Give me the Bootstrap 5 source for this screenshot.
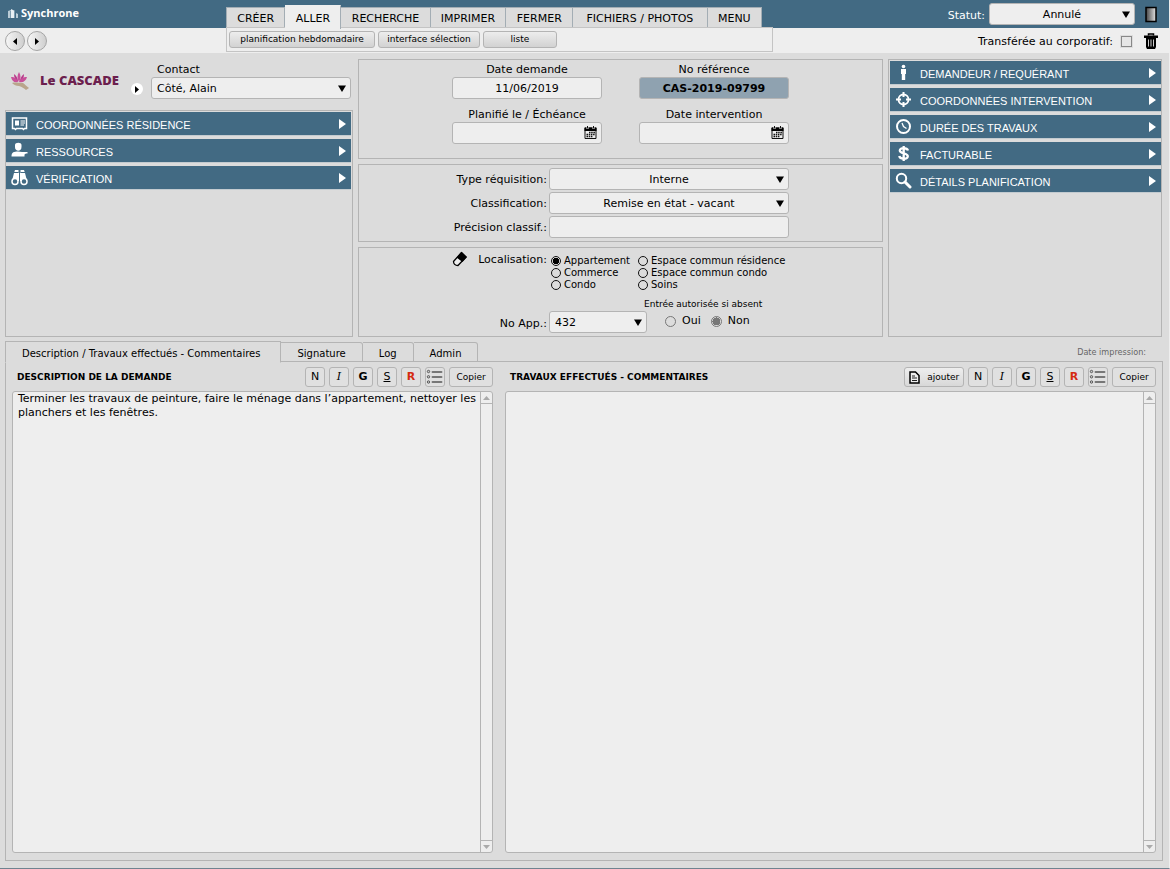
<!DOCTYPE html>
<html lang="fr">
<head>
<meta charset="utf-8">
<meta name="viewport" content="width=device-width, initial-scale=1">
<title>Synchrone</title>
<link href="https://cdn.jsdelivr.net/npm/bootstrap@5.3.0/dist/css/bootstrap.min.css" rel="stylesheet">
<style>
:root{--blue:#426a83;--bg:#dcdcdc;--field:#eee;--line:#b4b4b4}
body{font-family:"DejaVu Sans",Verdana,sans-serif;font-size:11px;line-height:14px;color:#000;background:var(--bg);border-right:1px solid #eee;border-bottom:1px solid #6f8390}
button,input,select,textarea{font:inherit;color:inherit}
/* header */
.topbar{background:linear-gradient(var(--blue) 28px,#eee 28px);height:53px}
.brand-col{width:226px}
.brand-name{font:bold 11px/14px "Open Sans",sans-serif;color:#fff;padding:6px 0 0 8px;height:30px;gap:2px}
.pager{gap:2px;padding:1px 0 0 5px}
.round-btn{width:20px;height:20px;border-radius:50%;border:1px solid #a5a5a5;background:linear-gradient(90deg,#f6f6f6,#cfcfcf)}
.round-btn.plain{width:12px;height:12px;background:#fff;border:0}
.menu-tabs{height:27px;padding-top:5px;width:536px}
.menu-tabs .nav-link{color:#000;padding:0 8px;border:1px solid #a3adb4;border-bottom:0;border-left-width:0;border-radius:0;background:var(--bg);height:20px;line-height:22px;white-space:nowrap}
.menu-tabs .nav-link.roomy{padding:0 11px}
.menu-tabs .nav-item:first-child .nav-link{border-left-width:1px}
.menu-tabs .nav-link.active{background:#eee;height:24px;line-height:26px;border-color:#eee #a3adb4 #eee #eee;margin-bottom:-2px}
.sub-menu{width:547px;height:25px;border:1px solid #c4c4c4;background:#eee;padding:3px 2px;gap:3px}
.sub-menu button{height:17px;font-size:9px;line-height:15px}
.soft-btn{border:1px solid var(--line);border-radius:3px;background:linear-gradient(#ededed,#d2d2d2);padding:0}
.w-a{width:146px}.w-b{width:102px}.w-c{width:74px}
.status-side{margin-right:11px}
.status-row{padding-top:3px}
.transfer-row{padding-top:8px}
.transfer-row label{padding-top:1px}
/* fields */
.fld{width:100%;height:22px;border:1px solid var(--line);border-radius:3px;background-color:var(--field);padding:1px 5px 0}
select.fld{appearance:none;background-repeat:no-repeat;background-position:right 4px center;background-image:url("data:image/svg+xml,%3Csvg xmlns='http://www.w3.org/2000/svg' width='8' height='7'%3E%3Cpath d='M0 .5h8L4 7z'/%3E%3C/svg%3E")}
.fld.mid{text-align:center;text-align-last:center}
.ref-no{background-color:#8fa2b0;font-weight:bold}
.status-field{width:146px}
.cal-btn{position:absolute;right:5px;top:4px;line-height:0}
.bare{border:0;background:none;padding:0}
/* upper columns */
.upper{display:grid;grid-template-columns:348fr 525fr 274fr;gap:5px;padding:6px 7px 0 5px}
.frame{border:1px solid var(--line)}
.frame.open-list{padding:1px 1px 0 0;gap:4px}
.frame.right-list{padding:1px 0 0 1px}
.residence{height:51px}
.logo-word{font:800 13px/18px "Open Sans",sans-serif;color:#6c1f4e}
.logo-mark{margin:13px 0 0 5px}
.contact-box{width:202px;padding:3px 2px 0 0}
.contact-box label{line-height:15px;padding-left:6px}
.section-bar{display:flex;align-items:center;width:100%;height:23px;border:0;background:var(--blue);color:#fff;padding:0 5px;font:11px/19px "Liberation Sans",Arial,sans-serif;text-align:left;box-shadow:0 1px 0 #c3cbd0}
.section-bar span{padding-top:4px}
.section-bar svg:first-child{width:17px;height:17px;margin-right:8px;flex:none}
.date-grid{display:grid;grid-template-columns:150px 150px;column-gap:37px;row-gap:9px;justify-content:center;text-align:center;padding:3px 0 14px}
.date-grid label{display:block;line-height:14px}
.req-grid{display:grid;grid-template-columns:97px 240px;row-gap:2px;justify-content:center;align-items:center;padding:3px 0}
.req-grid .lbl{text-align:right;padding:2px 2px 0 0;white-space:nowrap}
.location{min-height:90px}
.choices{display:grid;grid-template-columns:87px auto;font-size:10px;line-height:12px;padding:4px 0 0 2px;white-space:nowrap}
.choices label,.yesno label{display:flex;align-items:center}
.rad{appearance:none;width:10px;height:10px;border:1px solid #111;border-radius:50%;margin:0 3px 0 0;flex:none}
.rad:checked{background:radial-gradient(circle,#000 0 3px,transparent 3px)}
.yesno .rad{border-color:#777;width:11px;height:11px;margin-right:6px}
.yesno .rad:checked{background:radial-gradient(circle,#777 0 4px,transparent 4px)}
.yesno-row{gap:10px;padding:4px 0 5px 18px}
.tiny{font-size:9px;line-height:12px}
.print-date{font-family:"DejaVu Sans Condensed","DejaVu Sans",sans-serif;color:#666;padding:9px 23px 0 0}
.app-select{width:98px}
.tickbox{appearance:none;width:11px;height:11px;border:1px solid #888;background:#e6e6e6;margin:0;outline:1px solid #ddd}
/* lower tabs */
.page-tabs{padding:3px 0 0 5px;height:25px;position:relative;font-size:10px}
.page-tabs .nav-link{color:#000;padding:0 16px;border:1px solid var(--line);border-left-width:0;border-radius:0 3px 0 0;height:20px;line-height:22px}
.page-tabs .nav-link.active{background:var(--bg);color:#000;border-color:var(--line) var(--line) var(--bg);border-left-width:1px;border-radius:0;height:22px;line-height:24px;margin-bottom:-1px;padding:0 20px 0 16px}
.workspace{display:grid;grid-template-columns:481fr 651fr;gap:12px;margin:-1px 6px 7px 5px;border:1px solid var(--line);padding:5px 6px 7px}
.pane-title{font-size:9px;font-weight:bold;margin:0;line-height:14px;padding-left:5px}
.tool-btn{width:20px;height:20px;border:1px solid var(--line);border-radius:3px;background:#e0e0e0;padding:0;line-height:18px;text-align:center}
.tool-btn.wide{width:44px;font-size:9px}
.tool-btn.add{width:60px;font-size:9px;background:linear-gradient(#eee,#d8d8d8)}
.slanted{font-family:"DejaVu Serif",serif;font-style:italic}
.red-ink{color:#d42a10}
.note{border:1px solid var(--line);border-radius:3px;background:var(--field);margin-top:4px}
.note textarea{border:0;background:none;resize:none;padding:0 0 0 5px;outline:0;line-height:14px;overflow:hidden}
.scroller{width:12px;border-left:1px solid var(--line)}
.scroller button{height:12px;line-height:0;width:11px}
.scroller button:first-child{border-bottom:1px solid var(--line)}
.scroller button:last-child{border-top:1px solid var(--line)}
</style>
</head>
<body class="d-flex flex-column min-vh-100">
<svg width="0" height="0" class="position-absolute" aria-hidden="true">
  <symbol id="cal" viewBox="0 0 13 13"><path d="M1 2h11v10.500H1z" fill="#eee" stroke="#111"/><path d="M.5 1.500h12V5H.5z"/><path d="M3.500 0v3M9.500 0v3" stroke="#eee" stroke-width="2"/><path d="M3.500 0v2.500M9.500 0v2.500" stroke="#111"/><path d="M5 6.500h6M2.500 8.500H11M2.500 10.500H9" stroke="#111" stroke-width="1.300" stroke-dasharray="1.500 .7"/></symbol>
  <symbol id="go" viewBox="0 0 7 10"><path d="M0 0l7 5-7 5z" fill="#fff"/></symbol>
  <symbol id="bullets" viewBox="0 0 18 16"><g fill="#ccc" stroke="#555"><circle cx="2.500" cy="2.500" r="1.200"/><circle cx="2.500" cy="7.800" r="1.200"/><circle cx="2.500" cy="13" r="1.200"/></g><path d="M6.500 3h9M6.500 8h9M6.500 13h9" stroke="#777" stroke-width="1.900" stroke-linecap="round"/></symbol>
</svg>

<header class="topbar d-flex">
  <div class="brand-col flex-shrink-0">
    <div class="brand-name d-flex"><svg width="11" height="14" viewBox="0 0 11 14"><path d="M0 5l3-1v8H0zM8 7l2 1v4H8z" fill="#b9cbd6"/><path d="M3 3l4 2v7H3z" fill="#e8eff3"/><path d="M2.500 5v7M6.500 5v7" stroke="#7d9bae"/></svg><span>Synchrone</span></div>
    <div class="pager d-flex">
      <button class="round-btn p-0 d-flex align-items-center justify-content-center" aria-label="Précédent"><svg width="4" height="7" viewBox="0 0 4 7"><path d="M4 0v7L0 3.500z"/></svg></button>
      <button class="round-btn p-0 d-flex align-items-center justify-content-center" aria-label="Suivant"><svg width="4" height="7" viewBox="0 0 4 7"><path d="M0 0v7l4-3.500z"/></svg></button>
    </div>
  </div>
  <div class="flex-shrink-0">
    <ul class="nav nav-fill menu-tabs align-items-end flex-nowrap">
      <li class="nav-item"><a class="nav-link" href="#">CRÉER</a></li>
      <li class="nav-item"><a class="nav-link active" href="#">ALLER</a></li>
      <li class="nav-item"><a class="nav-link" href="#">RECHERCHE</a></li>
      <li class="nav-item"><a class="nav-link" href="#">IMPRIMER</a></li>
      <li class="nav-item"><a class="nav-link" href="#">FERMER</a></li>
      <li class="nav-item"><a class="nav-link roomy" href="#">FICHIERS / PHOTOS</a></li>
      <li class="nav-item"><a class="nav-link" href="#">MENU</a></li>
    </ul>
    <div class="sub-menu d-flex">
      <button class="soft-btn w-a">planification hebdomadaire</button>
      <button class="soft-btn w-b">interface sélection</button>
      <button class="soft-btn w-c">liste</button>
    </div>
  </div>
  <div class="ms-auto flex-shrink-0 status-side">
    <div class="status-row d-flex align-items-center text-white">
      <label for="statut" class="me-1 ms-auto pt-1">Statut:</label>
      <select id="statut" class="fld mid status-field text-black"><option>Annulé</option></select>
      <button class="bare ms-2 lh-1" aria-label="Sortie"><svg width="15" height="17" viewBox="0 0 15 17"><defs><linearGradient id="door"><stop stop-color="#444"/><stop offset="1" stop-color="#e5e5e5"/></linearGradient></defs><path d="M3 1.500h10v14H3z" fill="url(#door)" stroke="#000" stroke-width="1.500"/></svg></button>
    </div>
    <div class="transfer-row d-flex align-items-center justify-content-end">
      <label for="corp" class="me-2">Transférée au corporatif:</label>
      <input type="checkbox" class="tickbox" id="corp">
      <button class="bare ms-2 ps-1 lh-1" aria-label="Supprimer"><svg width="14" height="16" viewBox="0 0 14 16"><path d="M4.500 2.500V1h5v1.500" fill="none" stroke="#000" stroke-width="1.500"/><path d="M0 2.500h14V5H0zM2 4.500h10V14l-1 2H3l-1-2z"/><path d="M4.500 6.500v7M7 6.500v7M9.500 6.500v7" stroke="#ccc"/></svg></button>
    </div>
  </div>
</header>

<main class="d-flex flex-column flex-grow-1">
<div class="upper">
  <section class="d-flex flex-column">
    <div class="residence d-flex align-items-start">
      <svg width="22" height="20" viewBox="0 0 22 20" class="logo-mark"><g fill="#c8509a"><path d="M9 0c2 3 2 7 0 10-2-3-2-7 0-10z"/><path d="M4 2c3 2 4 5 4 8C5 8 4 5 4 2zM14 2c-3 2-4 5-4 8 3-2 4-5 4-8z" fill="#b83a8b"/><path d="M1 5c4 0 6 2 7 5-4 1-6-1-7-5zM17 5c-4 0-7 2-8 5 4 1 7-1 8-5z"/></g><path d="M2 11c3-1 7 0 11 0 2 1 3 3 6 5l-3 2c-2-2-4-3-7-4-3 0-5-1-7-3z" fill="#b9a58b"/></svg>
      <span class="logo-word ms-2 pt-1 mt-2">Le CASCADE</span>
      <button class="round-btn plain p-0 ms-auto mt-4 d-flex align-items-center justify-content-center" aria-label="Ouvrir la résidence"><svg width="4" height="7" viewBox="0 0 4 7"><path d="M0 0v7l4-3.500z"/></svg></button>
      <div class="contact-box ms-2"><label for="contact" class="d-block">Contact</label>
      <select id="contact" class="fld"><option>Côté, Alain</option></select></div>
    </div>
    <div class="frame open-list d-flex flex-column flex-grow-1">
      <button class="section-bar"><svg viewBox="0 0 17 17"><path d="M1.500 3h14v10.500h-2l-1 1-1-1h-6l-1 1-1-1h-2z" fill="none" stroke="#fff" stroke-width="1.500"/><path d="M4 5.500h4v5H4z" fill="#fff"/><path d="M9.500 6H14M9.500 8H14M9.500 10H13" stroke="#fff"/></svg><span>COORDONNÉES RÉSIDENCE</span><svg width="7" height="10" class="ms-auto"><use href="#go"/></svg></button>
      <button class="section-bar"><svg viewBox="0 0 17 17"><path d="M4 5V3c0-3 6.500-3 6.500 0v2c0 5-6.500 5-6.500 0z" fill="#fff"/><path d="M.5 14.500C.5 10 3 9.500 7 9.500l4 .5h5.500v1.500H15l-1.500 1V14.500z" fill="#fff"/></svg><span>RESSOURCES</span><svg width="7" height="10" class="ms-auto"><use href="#go"/></svg></button>
      <button class="section-bar"><svg viewBox="0 0 17 17"><path d="M4 1h3.500v3H8v8H1l2-8zM9.500 1H13l1 3 2 8H9V4h.5z" fill="#fff"/><path d="M2.500 3.500h5M9.500 3.500h5" stroke="#426a83"/><g fill="#426a83" stroke="#fff" stroke-width="1.500"><circle cx="4" cy="12.500" r="3"/><circle cx="13" cy="12.500" r="3"/></g></svg><span>VÉRIFICATION</span><svg width="7" height="10" class="ms-auto"><use href="#go"/></svg></button>
    </div>
  </section>

  <section class="d-flex flex-column" style="gap:5px">
    <div class="frame date-grid">
      <div><label for="d1">Date demande</label><input id="d1" class="fld mid" value="11/06/2019"></div>
      <div><label for="d2">No référence</label><input id="d2" class="fld mid ref-no" value="CAS-2019-09799"></div>
      <div><label for="d3">Planifié le / Échéance</label><div class="position-relative"><input id="d3" class="fld"><button class="bare cal-btn" aria-label="Calendrier"><svg width="13" height="13"><use href="#cal"/></svg></button></div></div>
      <div><label for="d4">Date intervention</label><div class="position-relative"><input id="d4" class="fld"><button class="bare cal-btn" aria-label="Calendrier"><svg width="13" height="13"><use href="#cal"/></svg></button></div></div>
    </div>
    <div class="frame req-grid">
      <label class="lbl" for="r1">Type réquisition:</label><select id="r1" class="fld mid"><option>Interne</option></select>
      <label class="lbl" for="r2">Classification:</label><select id="r2" class="fld mid"><option>Remise en état - vacant</option></select>
      <label class="lbl" for="r3">Précision classif.:</label><input id="r3" class="fld">
    </div>
    <div class="frame req-grid location flex-grow-1 align-content-between">
      <div class="lbl d-flex justify-content-between align-self-start pt-0"><button class="bare" aria-label="Effacer"><svg width="16" height="16" viewBox="0 0 16 16"><path d="M9.500 1.500L14 6 6 14.500c-3 0-4.500-2-4.500-4z" fill="#eee" stroke="#000" stroke-linejoin="round" stroke-width="1.300"/><path d="M9.500 1L15 6l-4.500 5-6-4.500z"/></svg></button><span style="padding-top:2px">Localisation:</span></div>
      <div class="choices">
        <label><input class="rad" type="radio" name="loc" checked>Appartement</label><label><input class="rad" type="radio" name="loc">Espace commun résidence</label>
        <label><input class="rad" type="radio" name="loc">Commerce</label><label><input class="rad" type="radio" name="loc">Espace commun condo</label>
        <label><input class="rad" type="radio" name="loc">Condo</label><label><input class="rad" type="radio" name="loc">Soins</label>
      </div>
      <label class="lbl align-self-end" for="app" style="padding-bottom:2px">No App.:</label>
      <div class="d-flex align-items-end">
        <select id="app" class="fld app-select flex-shrink-0"><option>432</option></select>
        <div class="yesno flex-grow-1 text-nowrap"><div class="tiny" style="margin-left:-3px">Entrée autorisée si absent</div>
          <div class="yesno-row d-flex"><label><input class="rad" type="radio" name="abs">Oui</label><label><input class="rad" type="radio" name="abs" checked>Non</label></div></div>
      </div>
    </div>
  </section>

  <section class="frame open-list right-list d-flex flex-column">
    <button class="section-bar"><svg viewBox="0 0 17 17"><circle cx="8.500" cy="2.500" r="1.800" fill="#fff"/><path d="M6 5h5v5h-.8v6H6.800v-6H6z" fill="#fff"/></svg><span>DEMANDEUR / REQUÉRANT</span><svg width="7" height="10" class="ms-auto"><use href="#go"/></svg></button>
    <button class="section-bar"><svg viewBox="0 0 17 17"><circle cx="8.500" cy="8.500" r="5" fill="none" stroke="#fff" stroke-width="1.800"/><path d="M8.500 1v5M8.500 11v5M1 8.500h5M11 8.500h5" stroke="#fff" stroke-width="2"/></svg><span>COORDONNÉES INTERVENTION</span><svg width="7" height="10" class="ms-auto"><use href="#go"/></svg></button>
    <button class="section-bar"><svg viewBox="0 0 17 17"><circle cx="8.500" cy="8.500" r="6.500" fill="none" stroke="#fff" stroke-width="2"/><path d="M7 5l1.500 3.500 3 2" fill="none" stroke="#fff" stroke-width="1.300"/></svg><span>DURÉE DES TRAVAUX</span><svg width="7" height="10" class="ms-auto"><use href="#go"/></svg></button>
    <button class="section-bar"><svg viewBox="0 0 17 17"><path d="M13 5.500C12 2.500 4.800 2.300 4.800 5.500c0 3.500 8 2 8 5.800 0 3.400-7.800 3.200-8.600-.3M8.700 1v15" fill="none" stroke="#fff" stroke-width="2.300"/></svg><span>FACTURABLE</span><svg width="7" height="10" class="ms-auto"><use href="#go"/></svg></button>
    <button class="section-bar"><svg viewBox="0 0 17 17"><circle cx="6.500" cy="6.500" r="4.700" fill="none" stroke="#fff" stroke-width="2"/><path d="M10 10l5 5" stroke="#fff" stroke-width="3" stroke-linecap="round"/></svg><span>DÉTAILS PLANIFICATION</span><svg width="7" height="10" class="ms-auto"><use href="#go"/></svg></button>
  </section>
</div>

<div class="d-flex justify-content-between">
  <ul class="nav page-tabs align-items-end flex-nowrap">
    <li class="nav-item"><a class="nav-link active" href="#">Description / Travaux effectués - Commentaires</a></li>
    <li class="nav-item"><a class="nav-link" href="#">Signature</a></li>
    <li class="nav-item"><a class="nav-link" href="#">Log</a></li>
    <li class="nav-item"><a class="nav-link" href="#">Admin</a></li>
  </ul>
  <span class="tiny print-date">Date impression:</span>
</div>

<div class="workspace flex-grow-1">
  <section class="d-flex flex-column">
    <div class="d-flex align-items-center gap-1">
      <h2 class="pane-title me-auto">DESCRIPTION DE LA DEMANDE</h2>
      <button class="tool-btn">N</button><button class="tool-btn slanted">I</button><button class="tool-btn fw-bold">G</button><button class="tool-btn text-decoration-underline">S</button><button class="tool-btn fw-bold red-ink">R</button><button class="tool-btn d-flex align-items-center justify-content-center" aria-label="Liste"><svg width="18" height="16"><use href="#bullets"/></svg></button><button class="tool-btn wide">Copier</button>
    </div>
    <div class="note d-flex flex-grow-1"><textarea class="flex-grow-1" aria-label="Description de la demande">Terminer les travaux de peinture, faire le ménage dans l’appartement, nettoyer les planchers et les fenêtres.</textarea>
      <div class="scroller d-flex flex-column justify-content-between"><button class="bare" aria-label="Monter"><svg width="7" height="4"><path d="M0 4h7L3.500 0z" fill="#aaa"/></svg></button><button class="bare" aria-label="Descendre"><svg width="7" height="4"><path d="M0 0h7L3.500 4z" fill="#aaa"/></svg></button></div></div>
  </section>
  <section class="d-flex flex-column">
    <div class="d-flex align-items-center gap-1">
      <h2 class="pane-title me-auto">TRAVAUX EFFECTUÉS - COMMENTAIRES</h2>
      <button class="tool-btn add d-flex align-items-center justify-content-around"><svg width="11" height="13" viewBox="0 0 11 13"><path d="M1 1h5.500L10 4.500V12H1z" fill="#eee" stroke="#000" stroke-width="1.500"/><path d="M3 5h3M3 7h5M3 9.500h5" stroke="#222"/></svg>ajouter</button>
      <button class="tool-btn">N</button><button class="tool-btn slanted">I</button><button class="tool-btn fw-bold">G</button><button class="tool-btn text-decoration-underline">S</button><button class="tool-btn fw-bold red-ink">R</button><button class="tool-btn d-flex align-items-center justify-content-center" aria-label="Liste"><svg width="18" height="16"><use href="#bullets"/></svg></button><button class="tool-btn wide">Copier</button>
    </div>
    <div class="note d-flex flex-grow-1"><textarea class="flex-grow-1" aria-label="Travaux effectués"></textarea>
      <div class="scroller d-flex flex-column justify-content-between"><button class="bare" aria-label="Monter"><svg width="7" height="4"><path d="M0 4h7L3.500 0z" fill="#aaa"/></svg></button><button class="bare" aria-label="Descendre"><svg width="7" height="4"><path d="M0 0h7L3.500 4z" fill="#aaa"/></svg></button></div></div>
  </section>
</div>
</main>
<script src="https://cdn.jsdelivr.net/npm/bootstrap@5.3.0/dist/js/bootstrap.bundle.min.js"></script>
</body>
</html>
